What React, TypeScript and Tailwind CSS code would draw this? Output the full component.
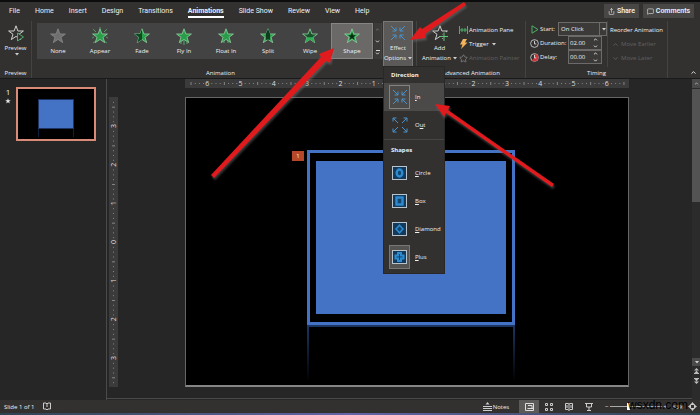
import { ChevronDown, ChevronUp, MessageSquare, Share, Star } from 'lucide-react'
import type { ReactNode } from 'react'

const tabs = ['File', 'Home', 'Insert', 'Design', 'Transitions', 'Animations', 'Slide Show', 'Review', 'View', 'Help']

type Effect = 'None' | 'Appear' | 'Fade' | 'Fly In' | 'Float In' | 'Split' | 'Wipe' | 'Shape'
const effects: Effect[] = ['None', 'Appear', 'Fade', 'Fly In', 'Float In', 'Split', 'Wipe', 'Shape']

const STAR = 'M8 .8 9.9 6h5.5l-4.4 3.3 1.7 5.3L8 11.4l-4.7 3.2L5 9.3.6 6h5.5z'

function EffectStar({ kind }: { kind: Effect }) {
  const none = kind === 'None'
  const stroke = none ? '#8a8a8a' : '#8fd3a0'
  return (
    <svg viewBox="0 0 16 16" className="h-4 w-4 overflow-visible" aria-hidden="true">
      {kind === 'Appear' && (
        <path d="M1 1l3 3M15 1l-3 3M8-1v2M0 10l2-1M16 10l-2-1M1 15l3-2M15 15l-3-2" stroke="#4fae68" strokeWidth=".8" />
      )}
      <path d={STAR} fill={none ? '#6f6f6f' : kind === 'Wipe' ? '#16512a' : '#2a9d4a'} stroke={stroke} strokeWidth=".8" />
      {kind === 'Fade' && <path d="M8 .8V11.4L3.3 14.6 5 9.3.6 6h5.5z" fill="#0d4a22" />}
      {kind === 'Split' && <path d="M8 .8 10.200 6 9.800 12 8 11.4 6.200 12 5.800 6z" fill="#0d3d1d" />}
      {kind === 'Wipe' && <path d="M5 9.3h6l1.7 5.3L8 11.4l-4.7 3.2z" fill="#2fae55" />}
      {kind === 'Fly In' && <path d="M5 12v4M8 11v6M11 12v4" stroke="#5cc178" strokeWidth=".8" />}
      {kind === 'Float In' && <path d="M6 13v2M10 13v2" stroke="#5cc178" strokeWidth=".8" />}
      {kind === 'Shape' && <path d="M8 4.5 9 7.200h2.800L9.500 9l.9 2.800L8 10.200l-2.400 1.600L6.500 9 4.200 7.200H7z" fill="#062b12" />}
    </svg>
  )
}

function ArrowsIcon({ out = false }: { out?: boolean }) {
  const d = out
    ? 'M6 6 1 1M1 4.500V1h3.500M10 6l5-5M11.500 1H15v3.500M6 10l-5 5M1 11.500V15h3.500M10 10l5 5M15 11.500V15h-3.500'
    : 'M1 1l5 5M6 2.500V6H2.500M15 1l-5 5M10 2.500V6h3.500M1 15l5-5M2.500 10H6v3.500M15 15l-5-5M13.500 10H10v3.500'
  return (
    <svg viewBox="0 0 16 16" className="h-4 w-4 shrink-0" fill="none" stroke="#4a92c9" strokeWidth="1" aria-hidden="true">
      <path d={d} />
    </svg>
  )
}

function Caret() {
  return (
    <svg viewBox="0 0 4 3" className="ml-0.5 h-[3px] w-1" fill="#d0d0d0" aria-hidden="true">
      <path d="M0 0h4L2 2.500z" />
    </svg>
  )
}

type ShapeName = 'Circle' | 'Box' | 'Diamond' | 'Plus'
const shapes: ShapeName[] = ['Circle', 'Box', 'Diamond', 'Plus']

function ShapeIcon({ name }: { name: ShapeName }) {
  return (
    <svg viewBox="0 0 15 14" className="h-3.5 w-[15px]" aria-hidden="true">
      <rect x=".5" y=".5" width="14" height="13" fill="#123a5c" stroke="#b9c3cc" />
      <g fill="#12466f" stroke="#2f8bd0" strokeWidth="2">
        {name === 'Circle' && <ellipse cx="7.5" cy="7" rx="2.800" ry="3.500" strokeWidth="2.400" />}
        {name === 'Box' && <rect x="4.500" y="3.500" width="6" height="7" strokeWidth="2.400" />}
        {name === 'Diamond' && <path d="M7.500 3.200 11 7l-3.500 3.800L4 7z" strokeWidth="1.500" />}
        {name === 'Plus' && <path d="M6 3h3v2.500h2.500v3H9V11H6V8.500H3.500v-3H6z" />}
      </g>
    </svg>
  )
}

type GroupProps = { label: string; className: string; labelClassName?: string; children: ReactNode }

function Group({ label, className, labelClassName = '', children }: GroupProps) {
  return (
    <section aria-label={label} className={`flex flex-col border-r border-[#444341] ${className}`}>
      <div className="flex h-[46px]">{children}</div>
      <div className={`pt-px text-center leading-[10px] whitespace-nowrap ${labelClassName}`}>{label}</div>
    </section>
  )
}

function HorizontalRuler() {
  const ticks = Array.from({ length: 105 }, (_, i) => i - 52)
  return (
    <svg className="h-[9px] w-full bg-[#3b3b3b]" aria-hidden="true">
      {ticks.map(t => {
        const x = `${50 + (t / 8) * 7.5}%`
        if (t % 8 === 0) {
          return (
            <text key={t} x={x} y="7" textAnchor="middle" fill="#dedede" className="text-[7px]">
              {Math.abs(t / 8)}
            </text>
          )
        }
        return <rect key={t} x={x} y={t % 4 === 0 ? 3 : 4} width="1" height={t % 4 === 0 ? 3 : 1} fill="#858585" />
      })}
    </svg>
  )
}

function VerticalRuler() {
  const ticks = Array.from({ length: 59 }, (_, i) => i - 29)
  return (
    <svg className="h-full w-[9px] bg-[#3b3b3b]" aria-hidden="true">
      {ticks.map(t => {
        const y = `${50 + (t / 8) * 13.33}%`
        if (t % 8 === 0) {
          return (
            <svg key={t} y={y} overflow="visible">
              <text transform="translate(7 0) rotate(-90)" textAnchor="middle" fill="#dedede" className="text-[7px]">
                {Math.abs(t / 8)}
              </text>
            </svg>
          )
        }
        return <rect key={t} x={t % 4 === 0 ? 3 : 4} y={y} width={t % 4 === 0 ? 3 : 1} height="1" fill="#858585" />
      })}
    </svg>
  )
}

function TimeField({ id, label, value }: { id: string; label: string; value: string }) {
  return (
    <div className="flex h-[14px] items-center gap-px">
      <svg viewBox="0 0 10 10" className="h-[9px] w-[9px] shrink-0" fill="none" aria-hidden="true">
        <circle cx="5" cy="5" r="4.300" stroke="#c8c8c8" />
        {id === 'delay' && <path d="M5 5V.7A4.300 4.300 0 1 1 2 8z" fill="#d13438" />}
        <path d="M5 2v3.500h2" stroke="#e0e0e0" />
      </svg>
      <label htmlFor={id} className="flex-1">{label}</label>
      <div className="mr-[5px] flex h-[14px] w-[34px] items-center border border-[#6c6b6a] bg-[#3b3a39]">
        <input id={id} defaultValue={value} className="w-6 pl-px outline-none" />
        <span className="flex flex-col gap-0.5"><ChevronUp size={5} strokeWidth={4} /><ChevronDown size={5} strokeWidth={4} /></span>
      </div>
    </div>
  )
}

function Ribbon() {
  return (
    <div className="flex h-[58px] bg-[#323130] pt-px">
      <Group label="Preview" className="w-8">
        <button className="flex w-full flex-col items-center pt-1">
          <svg viewBox="0 0 16 17" className="h-[17px] w-4" fill="none" aria-hidden="true">
            <path d={STAR} stroke="#d0d0d0" />
            <path d="M9.500 8v8l6-4z" fill="#323130" stroke="#4fae68" />
          </svg>
          <span className="mt-px leading-[10px]">Preview</span>
          <Caret />
        </button>
      </Group>

      <Group label="Animation" className="w-[385px] pl-[5px]" labelClassName="pr-3">
        <div className="mt-0.5 flex h-9 flex-1 bg-[#444343]">
          {effects.map(e => (
            <button
              key={e}
              aria-pressed={e === 'Shape'}
              className={`flex w-[42px] flex-col items-center ${e === 'Shape' ? 'border border-[#858585] bg-[#6a6968] pt-1' : 'pt-[5px]'}`}
            >
              <EffectStar kind={e} />
              <span className="mt-0.5 leading-[10px] whitespace-nowrap">{e}</span>
            </button>
          ))}
          <div className="flex w-2 flex-col border-l border-[#323130] bg-[#3b3a39]">
            <button aria-label="Scroll up" className="flex h-3 items-center justify-center text-[#777]"><ChevronUp size={5} strokeWidth={4} /></button>
            <button aria-label="Scroll down" className="flex h-3 items-center justify-center"><ChevronDown size={5} strokeWidth={4} /></button>
            <button aria-label="More effects" className="flex h-3 flex-col items-center justify-center"><span className="h-px w-1 bg-[#ddd]" /><ChevronDown size={5} strokeWidth={4} /></button>
          </div>
        </div>
        <button aria-expanded="true" className="ml-px flex h-[46px] w-[30px] flex-col items-center border border-[#777] bg-[#5b5a59] pt-[3px] text-center leading-[10px]">
          <ArrowsIcon />
          <span className="mt-0.5">Effect</span>
          <span className="flex items-center">Options<Caret /></span>
        </button>
        <span className="w-[3px]" />
      </Group>

      <Group label="Advanced Animation" className="w-[109px]">
        <button className="ml-[3px] flex w-[39px] flex-col items-center pt-1 leading-[10px]">
          <svg viewBox="0 0 16 17" className="h-[17px] w-4" fill="none" aria-hidden="true">
            <path d={STAR} stroke="#d0d0d0" />
            <path d="M8 11.500h9M12.500 7v9" stroke="#323130" strokeWidth="3" />
            <path d="M8 11.500h8M12 7.500v8.500" stroke="#5fc47b" />
          </svg>
          <span className="mt-px">Add</span>
          <span className="flex items-center">Animation<Caret /></span>
        </button>
        <div className="flex flex-col pt-0.5 leading-[14px] whitespace-nowrap">
          <button className="flex items-center gap-px">
            <svg viewBox="0 0 9 8" className="h-2 w-[9px]" aria-hidden="true">
              <path d="M.5 0v8M3 2v4M6 2v4M8.500 0v8M0 4h9" stroke="#4fae68" fill="none" />
            </svg>
            Animation Pane
          </button>
          <button className="flex items-center gap-px">
            <svg viewBox="0 0 9 10" className="h-2.5 w-[9px]" aria-hidden="true">
              <path d="M4 0h4L6 3.500h2.500L2 10l1.500-4.500H1z" fill="#f2b45c" />
            </svg>
            Trigger<Caret />
          </button>
          <button disabled className="flex items-center gap-px text-[#62605e]">
            <Star size={9} strokeWidth={2} color="#8c8a88" />
            Animation Painter
          </button>
        </div>
      </Group>

      <Group label="Timing" className="w-[142px]">
        <div className="flex w-[82px] flex-col border-r border-[#444341] pt-px pl-1">
          <div className="flex h-[14px] items-center">
            <svg viewBox="0 0 9 9" className="h-[9px] w-[9px] shrink-0" aria-hidden="true">
              <path d="M2 .8 8 4.500 2 8.200z" fill="none" stroke="#4fae68" />
            </svg>
            <label htmlFor="start" className="ml-px flex-1">Start:</label>
            <div className="flex h-[14px] w-[49px] items-center border border-[#6c6b6a] bg-[#3b3a39]">
              <select id="start" className="min-w-0 flex-1 appearance-none pl-0.5 leading-[10px] outline-none">
                <option>On Click</option>
              </select>
              <span className="flex h-full w-[7px] items-center border-l border-[#6c6b6a]"><Caret /></span>
            </div>
          </div>
          <TimeField id="duration" label="Duration:" value="02.00" />
          <TimeField id="delay" label="Delay:" value="00.00" />
        </div>
        <div className="flex flex-col pt-0.5 pl-0.5 leading-[14px] whitespace-nowrap">
          <span>Reorder Animation</span>
          <button disabled className="flex items-center gap-0.5 pl-0.5 text-[#62605e]"><ChevronUp size={7} strokeWidth={3} />Move Earlier</button>
          <button disabled className="flex items-center gap-0.5 pl-0.5 text-[#62605e]"><ChevronDown size={7} strokeWidth={3} />Move Later</button>
        </div>
      </Group>
      <div className="flex flex-1 items-end justify-end pr-[3px] pb-0.5">
        <button aria-label="Collapse ribbon"><ChevronUp size={7} strokeWidth={3} /></button>
      </div>
    </div>
  )
}

function EffectMenu() {
  return (
    <div role="menu" className="absolute top-[66px] left-[383px] z-10 w-[62px] border border-[#292827] bg-[#323130] pb-0.5">
      <div className="h-4 pl-[7px] leading-4 font-bold">Direction</div>
      <button role="menuitem" className="flex h-7 w-full items-center gap-[5px] bg-[#4b4a49] pl-[5px]">
        <span className="flex h-6 w-[21px] items-center justify-center border border-[#858381]"><ArrowsIcon /></span>
        <span><u>I</u>n</span>
      </button>
      <button role="menuitem" className="flex h-7 w-full items-center gap-[5px] pl-[5px]">
        <span className="flex w-[21px] justify-center"><ArrowsIcon out /></span>
        <span>O<u>u</u>t</span>
      </button>
      <div className="h-5 border-t border-[#484644] pl-[7px] leading-5 font-bold">Shapes</div>
      {shapes.map(name => (
        <button key={name} role="menuitem" className="flex h-[28px] w-full items-center gap-[5px] pl-[5px]">
          <span className={`flex h-6 w-[21px] items-center justify-center ${name === 'Plus' ? 'border border-[#777] bg-[#555453]' : ''}`}>
            <ShapeIcon name={name} />
          </span>
          <span><u>{name[0]}</u>{name.slice(1)}</span>
        </button>
      ))}
    </div>
  )
}

function Slide() {
  return (
    <div className="relative aspect-[444/290] w-full border border-b-2 border-[#666] border-b-[#858585] bg-black">
      <div className="h-[18%]" />
      <div className="ml-[27.4%] h-[61%] w-[47%] border-[3px] border-[#4472c4] px-1.5 py-2">
        <div className="h-full bg-[#4472c4]" />
      </div>
      <div className="ml-[27.4%] h-[20%] w-[47%] border-x-2 border-t-2 border-[#1d3563] [mask-image:linear-gradient(black,transparent)]" />
      <span className="absolute top-[18.5%] left-[24%] flex h-2.5 w-3 items-center justify-center bg-[#b7472a]">1</span>
    </div>
  )
}

function Arrows() {
  return (
    <svg className="pointer-events-none absolute top-0 left-0 z-20 h-[200px] w-[600px] drop-shadow-[1px_2px_1px_rgba(120,120,120,0.5)]" fill="#df1b1e" aria-hidden="true">
      <path d="M211 175 321 57 319 54 334 48 330 63 326 61 214 178z" />
      <path d="M464 2 422 29 420 27 410 40 426 38 425 34 466 5z" />
      <path d="M554 184 448 110 450 106 435 104 444 117 446 113 552 187z" />
    </svg>
  )
}

function StatusBar() {
  return (
    <footer className="flex h-[13px] items-center bg-[#323130] pr-[3px] pl-1">
      <span>Slide 1 of 1</span>
      <button aria-label="Spelling" className="ml-2">
        <svg viewBox="0 0 8 9" className="h-[9px] w-2" fill="none" stroke="#ccc" aria-hidden="true">
          <path d="M4 8 3 7H.5V1H3l1 1 1-1h2.500v6H5zM4 2v3" />
        </svg>
      </button>
      <button className="ml-auto flex items-center gap-px">
        <svg viewBox="0 0 9 9" className="h-[9px] w-[9px]" fill="#ccc" aria-hidden="true">
          <path d="M4.500 0 6.500 2.500h-4zM0 4h9v1H0zM0 6h9v1H0zM0 8h9v1H0z" />
        </svg>
        Notes
      </button>
      <div className="ml-2.5 flex h-full">
        <button aria-label="Normal" className="flex w-5 items-center justify-center bg-[#5b5a59]">
          <svg viewBox="0 0 9 8" className="h-2 w-[9px]" fill="none" stroke="#ddd" aria-hidden="true"><path d="M.5.5h8v7h-8zM2.500 5.500h6M3 2.500h4v3" /></svg>
        </button>
        <button aria-label="Slide sorter" className="flex w-5 items-center justify-center">
          <svg viewBox="0 0 8 8" className="h-2 w-2" fill="none" stroke="#ccc" aria-hidden="true"><path d="M.5.5h2v2h-2zM5.500.5h2v2h-2zM.5 5.500h2v2h-2zM5.500 5.500h2v2h-2z" /></svg>
        </button>
        <button aria-label="Reading view" className="flex w-5 items-center justify-center">
          <svg viewBox="0 0 8 8" className="h-2 w-2" fill="none" stroke="#ccc" aria-hidden="true"><path d="M4 7.500V1L3 .5H.5v6H3zl1-1h2.500V.5H5L4 1M2 2v3M6 2v3" /></svg>
        </button>
        <button aria-label="Slide show" className="flex w-5 items-center justify-center">
          <svg viewBox="0 0 8 8" className="h-2 w-2" fill="none" stroke="#ccc" aria-hidden="true"><path d="M0 .5h8M1.500.5v3.500h5V.5M4 4v3.500M2 7.500h4" /></svg>
        </button>
      </div>
      <button aria-label="Zoom out" className="ml-1 w-[7px]">−</button>
      <input
        type="range"
        aria-label="Zoom"
        defaultValue={34}
        className="h-2 w-[52px] appearance-none bg-transparent [&::-webkit-slider-runnable-track]:h-px [&::-webkit-slider-runnable-track]:bg-[#aaa] [&::-webkit-slider-thumb]:-mt-[3px] [&::-webkit-slider-thumb]:h-[7px] [&::-webkit-slider-thumb]:w-[3px] [&::-webkit-slider-thumb]:appearance-none [&::-webkit-slider-thumb]:bg-white"
      />
      <button aria-label="Zoom in" className="w-1.5">+</button>
      <span className="mx-1">63%</span>
      <button aria-label="Fit slide to window">
        <svg viewBox="0 0 9 9" className="h-[9px] w-[9px]" aria-hidden="true">
          <path d="M4.500 0 6 2H3zM4.500 9 6 7H3zM0 4.500 2 3v3zM9 4.500 7 3v3z" fill="#ccc" />
          <path d="M2.500 2.500h4v4h-4z" fill="none" stroke="#ccc" />
        </svg>
      </button>
    </footer>
  )
}

export default function App() {
  return (
    <div className="relative flex min-h-screen flex-col overflow-hidden bg-[#262626] font-['Open_Sans','Noto_Sans',sans-serif] text-[6px] leading-[10px] text-[#f0f0f0]">
      <div className="h-0.5 bg-[#0c0c0c]" />
      <nav className="flex h-[18px] items-center bg-[#323130] pl-[9px] font-[Roboto,sans-serif] text-[7px]">
        <div className="flex gap-[15px] whitespace-nowrap">
          {tabs.map(t => (
            <button key={t} className={t === 'Animations' ? 'border-b-2 border-white pt-0.5 font-bold' : ''}>{t}</button>
          ))}
        </div>
        <button className="ml-auto flex h-[14px] w-[35px] items-center justify-center gap-0.5 bg-[#484746] font-semibold"><Share size={7} />Share</button>
        <button className="mr-[6px] ml-1 flex h-[14px] w-[51px] items-center justify-center gap-0.5 bg-[#484746] font-semibold"><MessageSquare size={7} />Comments</button>
      </nav>
      <Ribbon />

      <main className="flex flex-1 border-t border-[#1a1a1a]">
        <aside className="flex w-[107px] items-start border-r border-[#4a4a4a] pt-2">
          <div className="flex w-4 flex-col items-center text-[8px]">
            <span>1</span>
            <svg viewBox="0 0 16 16" className="mt-px h-1.5 w-1.5" fill="#e8e8e8" aria-hidden="true"><path d={STAR} /></svg>
          </div>
          <div className="flex h-[54px] w-20 flex-col items-center border-2 border-[#d98b78] bg-black pt-2.5">
            <div className="h-[30px] w-9 border border-[#1d3563] bg-[#4472c4]" />
            <div className="h-2 w-9 border-x border-[#10203c]" />
          </div>
        </aside>
        <div className="flex flex-1 flex-col">
          <div className="pr-[63px] pl-[78px]"><HorizontalRuler /></div>
          <div className="mt-[9px] mb-[11px] flex pr-[63px] pl-0.5">
            <div className="mr-[67px] w-[9px] shrink-0"><VerticalRuler /></div>
            <Slide />
          </div>
          <div className="border-t border-[#4a4a4a]" />
        </div>
        <div className="flex w-2 flex-col items-center bg-[#2b2b2b] text-[#bbb]">
          <button aria-label="Scroll up" className="flex h-[9px] w-full items-center justify-center bg-[#4a4a4a]"><ChevronUp size={5} strokeWidth={4} /></button>
          <div className="mt-px h-[113px] w-full bg-[#535353]" />
          <button aria-label="Scroll down" className="mt-auto flex h-2 w-full items-center justify-center bg-[#4a4a4a]"><Caret /></button>
          <button aria-label="Previous slide" className="flex h-2.5 items-center">
            <svg viewBox="0 0 5 6" className="h-1.5 w-[5px]" fill="#bbb" aria-hidden="true"><path d="M2.500 0 5 2.500H0zM2.500 2.500 4.500 5h-4zM0 5h5v1H0z" /></svg>
          </button>
          <button aria-label="Next slide" className="mb-[14px] flex h-2.5 items-center">
            <svg viewBox="0 0 5 6" className="h-1.5 w-[5px]" fill="#bbb" aria-hidden="true"><path d="M2.500 6 5 3.500H0zM2.500 3.500 4.500 1h-4zM0 0h5v1H0z" /></svg>
          </button>
        </div>
      </main>
      <StatusBar />
      <div className="h-0.5 bg-gradient-to-r from-[#2e4350] via-[#6464a8] to-[#2e4350]" />

      <EffectMenu />
      <Arrows />
      <span className="absolute right-3 bottom-1 font-['Liberation_Sans',sans-serif] text-[12px] leading-3 text-black">wsxdn.com</span>
    </div>
  )
}
